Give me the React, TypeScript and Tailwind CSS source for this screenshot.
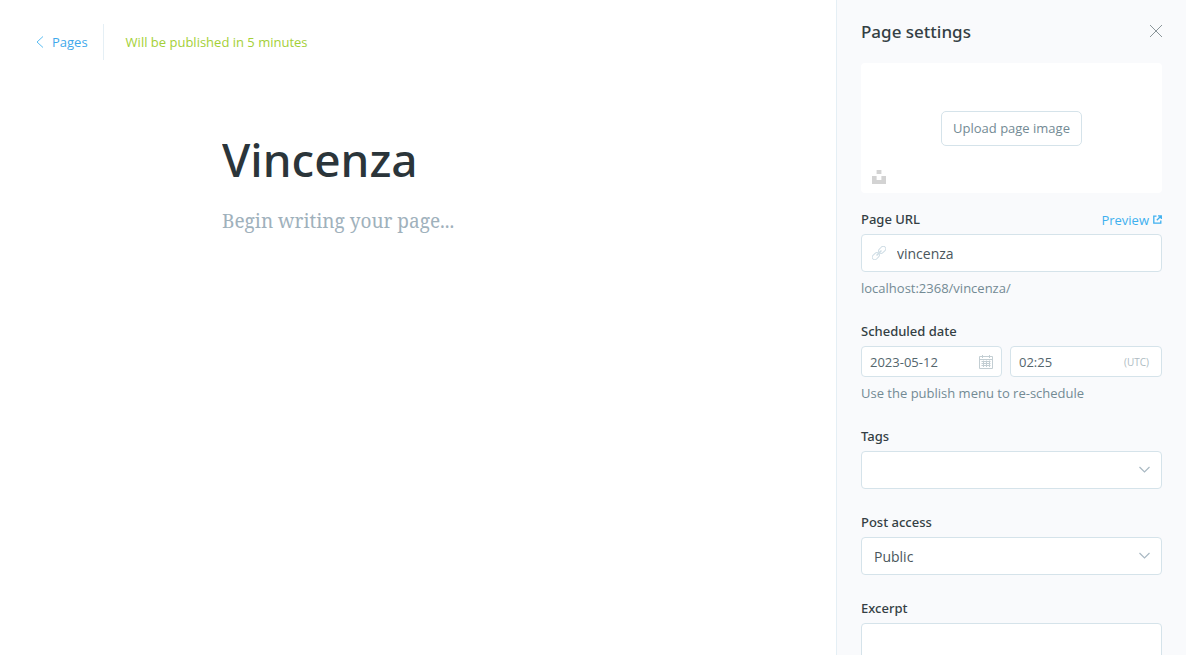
import { useState } from "react";
import type { ReactNode } from "react";

const fieldBox =
  "flex items-center rounded border border-[#d5e3ea] bg-white focus-within:border-[#3eb0ef]";
const textInput = "w-full min-w-0 pt-0.5 outline-none";

function Field({ label, htmlFor, action, help, children }: {
  label: string;
  htmlFor: string;
  action?: ReactNode;
  help?: string;
  children: ReactNode;
}) {
  return (
    <div>
      <div className="mb-1.5 flex h-[18px] items-center justify-between">
        <label htmlFor={htmlFor} className="font-['Noto_Sans',sans-serif] text-[13px] leading-[18px] font-medium text-[#343f44]">
          {label}
        </label>
        {action}
      </div>
      {children}
      {help && <p className="mt-1.5 text-[13px] leading-5 text-[#738a94]">{help}</p>}
    </div>
  );
}

function ChevronDown() {
  return (
    <svg className="pointer-events-none h-3 w-3 shrink-0" viewBox="0 0 12 12" fill="none" stroke="#a9b9c3" strokeWidth="1.2" aria-hidden="true">
      <path d="M1.5 3 6.500 8 11.500 3" />
    </svg>
  );
}

export default function App() {
  const [title, setTitle] = useState("Vincenza");
  const [slug, setSlug] = useState("vincenza");
  const [date, setDate] = useState("2023-05-12");
  const [time, setTime] = useState("02:25");

  return (
    <div className="flex h-screen overflow-hidden bg-white pr-2.5 font-['Open_Sans','Noto_Sans',sans-serif] text-[#343f44]">
      <main className="min-w-0 flex-1">
        <header className="flex h-[84px] items-center px-9 text-[13px]">
          <a href="#pages" className="flex items-center gap-2 text-[#3fa9ec]">
            <svg className="h-3 w-2" viewBox="0 0 8 12" fill="none" stroke="#5cbdf2" aria-hidden="true">
              <path d="M7 .5 1 6l6 5.5" />
            </svg>
            <span className="pt-0.5">Pages</span>
          </a>
          <span className="mr-4 ml-[15px] h-9 w-px bg-[#e5eff5]" />
          <span className="pt-0.5 pl-1.5 text-[#a4d037]">Will be published in 5 minutes</span>
        </header>
        <div className="mx-auto flex max-w-[740px] flex-col px-[174px] pt-10">
          <input
            aria-label="Page title"
            value={title}
            onChange={(e) => setTitle(e.target.value)}
            className="h-[70px] w-full font-['Noto_Sans',sans-serif] text-[46px] font-medium text-[#2b353a] outline-none"
          />
          <textarea
            aria-label="Page content"
            placeholder="Begin writing your page..."
            className="mt-[11px] h-80 w-full resize-none font-['Noto_Serif','Liberation_Serif',serif] text-[19px] leading-8 outline-none placeholder:text-[#9fb1bc]"
          />
        </div>
      </main>

      <aside className="w-[350px] shrink-0 overflow-y-auto border-l border-[#e5eff5] bg-[#f9fafc] px-6 [scrollbar-width:none]">
        <div className="flex h-[63px] items-center justify-between">
          <h2 className="font-['Noto_Sans',sans-serif] text-[17px] font-medium">Page settings</h2>
          <button type="button" aria-label="Close" className="-mr-px">
            <svg className="h-3.5 w-3.5" viewBox="0 0 14 14" fill="none" stroke="#8a9599" aria-hidden="true">
              <path d="m1 0 12 12M13 0 1 12" />
            </svg>
          </button>
        </div>

        <div className="relative mb-[17px] flex h-[130px] items-center justify-center rounded bg-white">
          <button type="button" className="h-[35px] rounded-[5px] border border-[#d5e3ea] px-[11px] pt-0.5 text-[13px] text-[#738a94]">
            Upload page image
          </button>
          <button type="button" aria-label="Choose a stock photo" className="absolute bottom-[9px] left-[11px]">
            <svg className="h-3.5 w-3.5" viewBox="0 0 14 14" fill="#d3d3d3" aria-hidden="true">
              <path d="M4.600 0h4.800v4H4.600zM0 6h4.600v4h4.800V6H14v8H0z" />
            </svg>
          </button>
        </div>

        <form className="flex flex-col gap-6 pb-6">
          <Field
            label="Page URL"
            htmlFor="slug"
            help="localhost:2368/vincenza/"
            action={
              <a href="#preview" className="flex items-center gap-1 text-[13px] leading-5 text-[#3eb0ef]">
                <span className="pt-0.5">Preview</span>
                <svg className="h-[9px] w-[9px]" viewBox="0 0 9 9" fill="none" stroke="currentColor" strokeWidth="1.3" aria-hidden="true">
                  <path d="M3.500 1.200H.8v7h7V5.500M5 .8h3.300V4M8 1 3.800 5.200" />
                </svg>
              </a>
            }
          >
            <div className={`${fieldBox} h-[38px] gap-[11px] px-2.5`}>
              <svg className="h-3.5 w-3.5 shrink-0" viewBox="0 0 14 14" fill="none" stroke="#cfdde5" aria-hidden="true">
                <g transform="rotate(-45 7 7)">
                  <rect x="-1.500" y="4.500" width="8" height="5" rx="2.500" />
                  <rect x="7.500" y="4.500" width="8" height="5" rx="2.500" />
                  <path d="M3.500 7h7" strokeWidth="1.500" />
                </g>
              </svg>
              <input id="slug" value={slug} onChange={(e) => setSlug(e.target.value)} className={`${textInput} text-sm text-[#4a565c]`} />
            </div>
          </Field>

          <Field label="Scheduled date" htmlFor="date" help="Use the publish menu to re-schedule">
            <div className="flex gap-2">
              <div className={`${fieldBox} h-[31px] w-[141px] px-2`}>
                <input id="date" value={date} onChange={(e) => setDate(e.target.value)} className={`${textInput} text-[13px] text-[#54666d]`} />
                <svg className="h-3.5 w-3.5 shrink-0" viewBox="0 0 14 14" fill="none" stroke="#c3ced3" aria-hidden="true">
                  <path d="M.5 1.500h13v12H.5zM.5 4.500h13M3.500 0v3M10.500 0v3M2.500 6.500h9M2.500 8.500h9M2.500 10.500h9M4.500 5.500v6.500M7.500 5.500v6.500M10.500 5.500v6.500" />
                </svg>
              </div>
              <div className={`${fieldBox} h-[31px] flex-1 pr-3 pl-2`}>
                <input aria-label="Scheduled time" value={time} onChange={(e) => setTime(e.target.value)} className={`${textInput} text-[13px] text-[#54666d]`} />
                <span className="pt-0.5 text-[10px] text-[#aebbc2]">(UTC)</span>
              </div>
            </div>
          </Field>

          <Field label="Tags" htmlFor="tags">
            <div className={`${fieldBox} h-[38px] px-[11px]`}>
              <input id="tags" className={`${textInput} text-sm`} />
              <ChevronDown />
            </div>
          </Field>

          <Field label="Post access" htmlFor="access">
            <div className={`${fieldBox} h-[38px] pr-[11px] pl-3`}>
              <select id="access" className={`${textInput} appearance-none text-sm text-[#4a565c]`}>
                <option>Public</option>
                <option>Members only</option>
                <option>Paid-members only</option>
              </select>
              <ChevronDown />
            </div>
          </Field>

          <Field label="Excerpt" htmlFor="excerpt">
            <textarea id="excerpt" className="block h-[108px] w-full resize-none rounded border border-[#d5e3ea] bg-white px-3 py-2 text-sm outline-none" />
          </Field>
        </form>
      </aside>
    </div>
  );
}
